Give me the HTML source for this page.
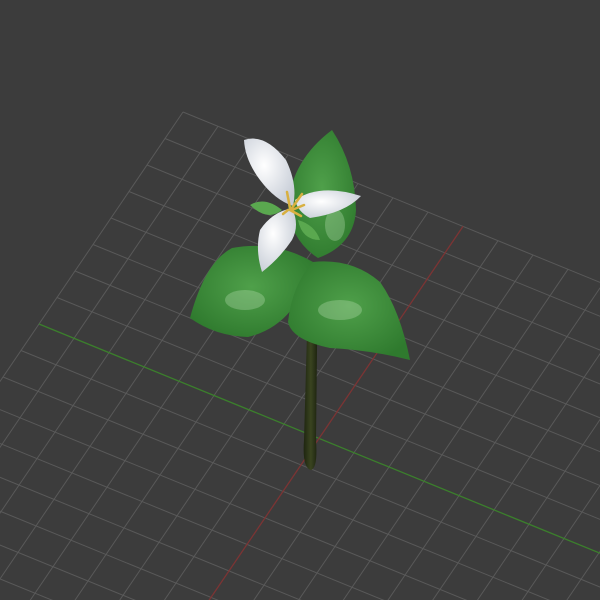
<!DOCTYPE html>
<html><head><style>html,body{margin:0;padding:0;background:#3c3c3c;overflow:hidden;width:600px;height:600px}svg{display:block}</style></head>
<body>
<svg width="600" height="600" viewBox="0 0 600 600" xmlns="http://www.w3.org/2000/svg">
<defs>
<radialGradient id="lf" cx="50%" cy="45%" r="60%"><stop offset="0" stop-color="#4fa04a"/><stop offset="1" stop-color="#2f7a2e"/></radialGradient>
<linearGradient id="st" x1="0" x2="1"><stop offset="0" stop-color="#1e2510"/><stop offset=".5" stop-color="#3a4420"/><stop offset="1" stop-color="#1a200e"/></linearGradient>
<radialGradient id="pt" cx="40%" cy="40%" r="70%"><stop offset="0" stop-color="#ffffff"/><stop offset="1" stop-color="#c6ccd6"/></radialGradient>
</defs>
<rect width="600" height="600" fill="#3c3c3c"/>
<g id="grid" stroke="#595959" stroke-width="1" fill="none"></g>
<g id="axes" stroke-width="1.3" fill="none"></g>
<!-- stem -->
<path d="M309 262 L318 262 L316 440 Q318 468 311 470 Q302 468 304 440 Z" fill="url(#st)"/>
<!-- back leaf -->
<path d="M332 130 Q355 165 356 210 Q354 245 318 258 Q290 240 288 205 Q292 160 332 130 Z" fill="url(#lf)"/>
<!-- left leaf -->
<path d="M313 262 Q275 240 232 248 Q205 262 190 318 Q215 336 248 337 Q298 325 313 262 Z" fill="url(#lf)"/>
<!-- right leaf -->
<path d="M313 262 Q352 258 380 282 Q400 310 410 360 Q370 350 330 348 Q292 340 288 322 Q292 285 313 262 Z" fill="url(#lf)"/>
<g fill="#c8e8c0" opacity=".3">
<ellipse cx="245" cy="300" rx="20" ry="10"/><ellipse cx="340" cy="310" rx="22" ry="10"/><ellipse cx="335" cy="225" rx="10" ry="16"/>
</g>
<!-- sepals -->
<path d="M250 205 Q265 196 282 210 Q268 222 250 205Z" fill="#5aa84f"/>
<path d="M298 220 Q315 225 320 240 Q302 240 298 220Z" fill="#5aa84f"/>
<!-- petals -->
<path d="M244 140 Q265 133 286 160 Q298 185 293 206 Q275 200 260 180 Q245 160 244 140Z" fill="url(#pt)"/>
<path d="M295 200 Q320 183 361 196 Q345 213 310 218 Q298 212 295 200Z" fill="url(#pt)"/>
<path d="M292 208 Q300 225 292 240 Q280 258 262 272 Q255 250 260 230 Q272 212 292 208Z" fill="url(#pt)"/>
<g stroke="#d8b040" stroke-width="2.5" stroke-linecap="round">
<line x1="290" y1="208" x2="287" y2="192"/><line x1="292" y1="208" x2="302" y2="194"/><line x1="292" y1="210" x2="304" y2="205"/><line x1="290" y1="210" x2="301" y2="216"/><line x1="288" y1="210" x2="283" y2="214"/>
</g>
</svg>
<script>
var g=document.getElementById('grid'),s='';
var c=[183,112],eu=[35,14.3],ev=[-18,26.5];
function p(u,v){return [c[0]+u*eu[0]+v*ev[0],c[1]+u*eu[1]+v*ev[1]];}
function L(a,b){return '<line x1="'+a[0]+'" y1="'+a[1]+'" x2="'+b[0]+'" y2="'+b[1]+'"/>';}
for(var v=0;v<=18;v++){if(v!=8)s+=L(p(0,v),p(18,v));}
for(var u=0;u<=18;u++){if(u!=8)s+=L(p(u,0),p(u,18));}
g.innerHTML=s;
document.getElementById('axes').innerHTML='<g stroke="#3b7f2c">'+L(p(0,8),p(18,8))+'</g><g stroke="#7c3434">'+L(p(8,0),p(8,18))+'</g>';
</script>
</body></html>
